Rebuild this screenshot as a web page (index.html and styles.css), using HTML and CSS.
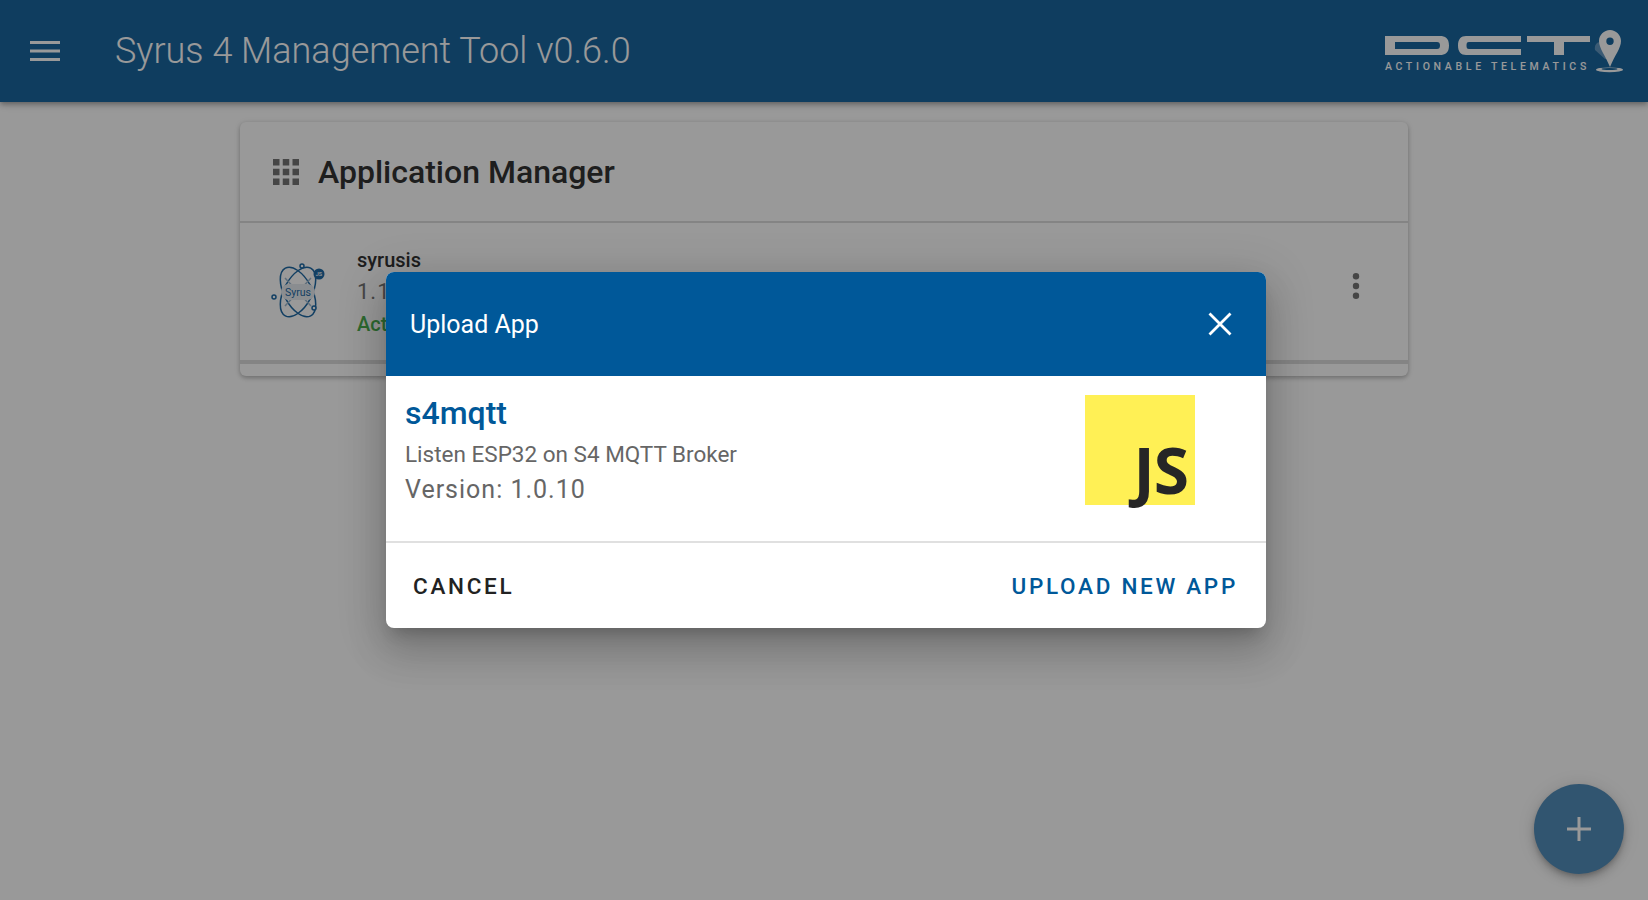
FILE: index.html
```html
<!DOCTYPE html>
<html lang="en">
<head>
<meta charset="utf-8">
<title>Syrus 4 Management Tool</title>
<link rel="stylesheet" href="styles.css">
</head>
<body>
<div class="app">
  <header class="topbar">
    <button class="menu-btn" aria-label="Menu">
      <svg width="30" height="20" viewBox="0 0 30 20"><path d="M0 0h30v3H0zM0 8.500h30v3H0zM0 17h30v3H0z" fill="#fff"/></svg>
    </button>
    <h1 class="app-title">Syrus 4 Management Tool v0.6.0</h1>
    <div class="brand">
      <div class="brand-words">
        <svg class="brand-mark" width="205" height="19" viewBox="0 0 205 19" aria-label="DCT">
          <path fill="#fff" fill-rule="evenodd" d="M0 0h55c5 0 9 2 9 9.500S60 19 55 19H0zM10 6v7h42c2 0 3-1 3-3.500S54 6 52 6z"/>
          <path fill="#fff" d="M73 0h63v6H84c-2 0-2.500 1-2.500 3.500S82 13 84 13h52v6H81c-5 0-8-3-8-9.500S76 0 81 0z"/>
          <path fill="#fff" d="M142 0h63v6h-26v13h-10V6h-27z"/>
        </svg>
        <div class="brand-tag">ACTIONABLE TELEMATICS</div>
      </div>
      <svg class="brand-pin" width="30" height="44" viewBox="0 0 30 44">
        <path fill="#9fc0dc" opacity=".55" d="M1 20c-1-5 2-8 5-8 2 0 4 1 5 4l4 13-4 0z"/>
        <path fill="#fff" fill-rule="evenodd" d="M16 0c6 0 11 5 11 11 0 7-6 14-11 26C11 25 5 18 5 11 5 5 10 0 16 0zm0 7.500a3.700 3.700 0 1 0 0 7.400 3.700 3.700 0 0 0 0-7.400z"/>
        <ellipse cx="15.500" cy="39.800" rx="13.500" ry="2.400" fill="#fff"/>
        <ellipse cx="15.500" cy="39" rx="8" ry="1" fill="#19669f"/>
      </svg>
    </div>
  </header>

  <main class="content">
    <section class="card">
      <div class="card-head">
        <svg class="grid-icon" width="26" height="26" viewBox="0 0 26 26"><path fill="#757575" d="M0 0h6.500v6.500H0zM9.750 0h6.500v6.500h-6.500zM19.500 0H26v6.500h-6.500zM0 9.750h6.500v6.500H0zM9.750 9.750h6.500v6.500h-6.500zM19.500 9.750H26v6.500h-6.500zM0 19.500h6.500V26H0zM9.750 19.500h6.500V26h-6.500zM19.500 19.500H26V26h-6.500z"/></svg>
        <h2 class="card-title">Application Manager</h2>
      </div>
      <div class="app-row">
        <svg class="app-logo" width="56" height="60" viewBox="0 0 56 60">
          <g fill="none" stroke="#1f6aa5" stroke-width="1.500">
            <ellipse cx="27" cy="30" rx="14" ry="27" transform="rotate(-28 27 30)"/>
            <ellipse cx="27" cy="30" rx="14" ry="27" transform="rotate(28 27 30)" />
            <path d="M14 16l26 28M40 16L14 44" stroke="#9db8cf"/>
          </g>
          <rect x="10" y="22" width="34" height="16" rx="8" fill="#e6ecf1"/>
          <text x="27" y="34" class="logo-word">Syrus</text>
          <circle cx="48" cy="12" r="5.500" fill="#1f6aa5"/>
          <text x="48" y="14" class="logo-js">JS</text>
          <g fill="#fff" stroke="#1f6aa5" stroke-width="1.500">
            <circle cx="31" cy="4" r="2"/><circle cx="3" cy="35" r="2"/><circle cx="43" cy="46" r="2"/>
          </g>
        </svg>
        <div class="app-info">
          <div class="app-name">syrusis</div>
          <div class="app-ver">1.1.0</div>
          <div class="app-state">Active</div>
        </div>
        <button class="kebab" aria-label="More">
          <svg width="8" height="26" viewBox="0 0 8 26"><circle cx="4" cy="3.300" r="3.200"/><circle cx="4" cy="13" r="3.200"/><circle cx="4" cy="22.700" r="3.200"/></svg>
        </button>
      </div>
      <div class="card-foot"></div>
    </section>
  </main>

  <button class="fab" aria-label="Add">
    <svg width="24" height="24" viewBox="0 0 24 24"><path fill="#fff" d="M10.500 0h3v10.500H24v3H13.500V24h-3V13.500H0v-3h10.500z"/></svg>
  </button>

  <div class="scrim"></div>

  <div class="dialog-layer">
    <div class="dialog" role="dialog">
      <div class="dialog-head">
        <span class="dialog-title">Upload App</span>
        <button class="dialog-close" aria-label="Close">
          <svg width="24" height="24" viewBox="0 0 24 24"><path d="M1.500 1.500l21 21M22.500 1.500l-21 21" stroke="#fff" stroke-width="2.800" fill="none"/></svg>
        </button>
      </div>
      <div class="dialog-body">
        <div class="pkg-text">
          <div class="pkg-name">s4mqtt</div>
          <div class="pkg-desc">Listen ESP32 on S4 MQTT Broker</div>
          <div class="pkg-ver">Version: 1.0.10</div>
        </div>
        <div class="js-badge"><span class="js-word">JS</span></div>
      </div>
      <div class="dialog-actions">
        <button class="btn btn-cancel">CANCEL</button>
        <button class="btn btn-upload">UPLOAD NEW APP</button>
      </div>
    </div>
  </div>
</div>
</body>
</html>
```
FILE: styles.css
```css
* { box-sizing: border-box; }
html, body { margin: 0; height: 100%; }
body { font-family: Roboto, "Liberation Sans", sans-serif; background: #fff; overflow: hidden; }
button { font: inherit; background: none; border: 0; padding: 0; cursor: pointer; }

.app { position: relative; height: 900px; display: flex; flex-direction: column; overflow: hidden; }

.topbar {
  flex: none; height: 102px; display: flex; align-items: center; padding: 0 24px 0 30px;
  background: #19669f; color: #fff;
  box-shadow: 0 2px 4px -1px rgba(0,0,0,.2), 0 4px 5px rgba(0,0,0,.14), 0 1px 10px rgba(0,0,0,.12);
}
.menu-btn { display: flex; width: 30px; height: 20px; }
.app-title { margin: 0 0 0 55px; font-size: 36px; font-weight: 300; line-height: 1; }
.brand { margin-left: auto; display: flex; align-items: flex-end; gap: 4px; }
.brand-words { display: flex; flex-direction: column; }
.brand-mark { display: block; }
.brand-tag { margin-top: 6px; font: 500 10.500px/12px Roboto, sans-serif; letter-spacing: 3.700px; color: #fff; white-space: nowrap; }
.brand-pin { display: block; margin-bottom: -1px; }

.content { flex: 1; padding: 20px 240px 0; }
.card {
  background: #fff; border-radius: 6px; height: 254px; display: flex; flex-direction: column;
  box-shadow: 0 2px 4px rgba(0,0,0,.2), 0 1px 6px rgba(0,0,0,.12);
}
.card-head { flex: none; height: 101px; display: flex; align-items: center; padding-left: 33px; border-bottom: 2px solid #ddd; }
.card-title { margin: 0 0 0 19px; font-size: 32px; font-weight: 500; line-height: 1; color: #333; }
.grid-icon { flex: none; }
.app-row { flex: 1; display: flex; align-items: center; padding: 0 48px 0 31px; border-bottom: 4px solid #ddd; }
.app-logo { flex: none; }
.app-info { margin-left: 30px; flex: 1; }
.app-name { font-size: 20px; font-weight: 500; color: #333; line-height: 32px; }
.app-ver { font-size: 22px; color: #757575; line-height: 32px; letter-spacing: 1px; }
.app-state { font-size: 20px; font-weight: 500; color: #4caf50; line-height: 32px; }
.kebab { display: flex; margin-bottom: 12px; fill: #757575; }
.card-foot { flex: none; height: 12px; }
.logo-word { font: 400 10.500px Roboto, sans-serif; fill: #1f6aa5; text-anchor: middle; }
.logo-js { font: 500 5.500px Roboto, sans-serif; fill: #fff; text-anchor: middle; }

.fab {
  position: absolute; right: 24px; bottom: 26px; width: 90px; height: 90px; border-radius: 50%;
  background: #538ebb; display: flex; align-items: center; justify-content: center;
  box-shadow: 0 3px 5px -1px rgba(0,0,0,.2), 0 6px 10px rgba(0,0,0,.14), 0 1px 18px rgba(0,0,0,.12);
}

.scrim { position: absolute; inset: 0; background: rgba(0,0,0,.4); }
.dialog-layer { position: absolute; inset: 0; display: flex; align-items: center; justify-content: center; padding-left: 4px; }
.dialog {
  width: 880px; height: 356px; background: #fff; border-radius: 8px; overflow: hidden; display: flex; flex-direction: column;
  box-shadow: 0 11px 15px -7px rgba(0,0,0,.2), 0 24px 38px 3px rgba(0,0,0,.14), 0 9px 46px 8px rgba(0,0,0,.12);
}
.dialog-head { flex: none; height: 104px; background: #005899; display: flex; align-items: center; justify-content: space-between; padding: 0 34px 0 24px; color: #fff; }
.dialog-title { font-size: 25px; font-weight: 400; }
.dialog-close { display: flex; }
.dialog-body { flex: none; height: 167px; display: flex; padding: 19px 71px 0 19px; border-bottom: 2px solid #e0e0e0; }
.pkg-text { flex: 1; }
.pkg-name { font-size: 32px; font-weight: 500; color: #005899; line-height: 36px; }
.pkg-desc { margin-top: 5px; font-size: 22.500px; color: #666; line-height: 36px; }
.pkg-ver { font-size: 25px; color: #666; line-height: 36px; letter-spacing: 1px; }
.js-badge { flex: none; width: 110px; height: 110px; background: #fff055; display: flex; align-items: flex-end; justify-content: flex-end; padding: 0 7px 3px 0; }
.js-word { font: 700 64px/1 "Open Sans", sans-serif; color: #262626; letter-spacing: -1px; }
.dialog-actions { flex: 1; display: flex; align-items: center; justify-content: space-between; padding: 0 28px 0 27px; }
.btn { font-size: 22.500px; font-weight: 500; letter-spacing: 2.700px; }
.btn-cancel { color: #222; }
.btn-upload { color: #005899; }
```
